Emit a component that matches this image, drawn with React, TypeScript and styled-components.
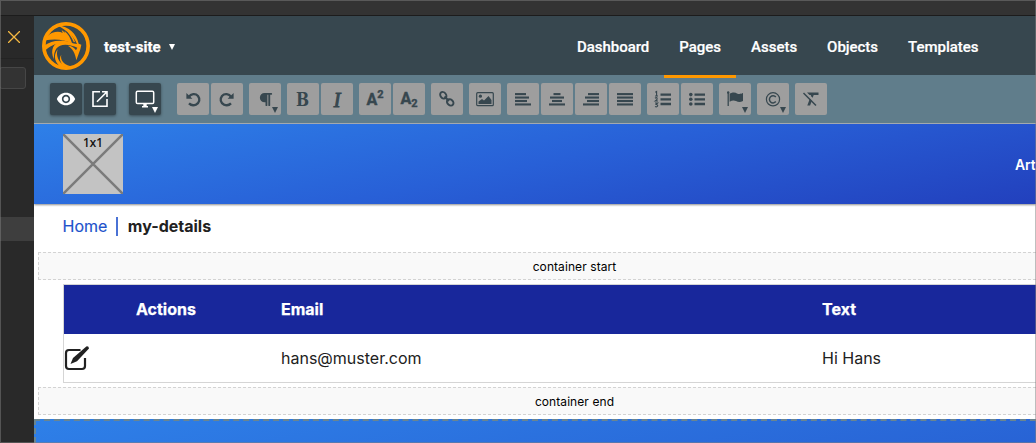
import React from "react";
import styled, { createGlobalStyle } from "styled-components";
import { FaParagraph } from "react-icons/fa";
import { MdVisibility } from "react-icons/md";

const slate = "#37474f";
const orange = "#ff9800";

const GlobalStyle = createGlobalStyle`
  * { box-sizing: border-box; }
  html, body { margin: 0; padding: 0; overflow: hidden; }
`;

const Window = styled.div`
  position: relative;
  width: 1036px;
  height: 443px;
  display: flex;
  flex-direction: column;
  overflow: hidden;
  background: #292929;
  font-family: Inter, "Liberation Sans", sans-serif;
  &::after {
    content: "";
    position: absolute;
    inset: 0;
    border: 1px solid rgba(128, 128, 128, 0.5);
    pointer-events: none;
  }
`;

const TitleStrip = styled.div`
  height: 16px;
  flex: none;
  background: #333;
  border-bottom: 1px solid #1c1c1c;
`;

const Body = styled.div`
  flex: 1;
  display: flex;
  min-height: 0;
`;

const Sidebar = styled.aside`
  width: 34px;
  flex: none;
  display: flex;
  flex-direction: column;
  background: #292929;
`;

const SidebarTop = styled.div`
  height: 43px;
  flex: none;
  padding: 15px 0 0 8px;
  border-bottom: 1px solid #232323;
  line-height: 0;
`;

const SidebarField = styled.div`
  height: 22px;
  width: 27px;
  margin-top: 8px;
  margin-left: -1px;
  flex: none;
  background: #333;
  border: 1px solid #464646;
  border-radius: 3px;
`;

const SidebarRow = styled.div`
  height: 24px;
  margin-top: 128px;
  flex: none;
  background: #3e3e3e;
`;

const Main = styled.main`
  flex: 1;
  min-width: 0;
  display: flex;
  flex-direction: column;
  overflow: hidden;
  background: #fff;
`;

const Header = styled.header`
  height: 59px;
  flex: none;
  display: flex;
  align-items: center;
  padding: 0 42.5px 0 8px;
  background: ${slate};
  color: #fff;
  font-family: Roboto, "Liberation Sans", sans-serif;
`;

const SiteName = styled.div`
  display: flex;
  align-items: center;
  gap: 8px;
  margin-left: 14px;
  margin-top: 3px;
  font-size: 15px;
  font-weight: 700;
  -webkit-text-stroke: 0.25px currentColor;
`;

const Caret = styled.span`
  width: 0;
  height: 0;
  margin-left: 0.5px;
  border-left: 3px solid transparent;
  border-right: 3px solid transparent;
  border-top: 6px solid currentColor;
`;

const Nav = styled.nav`
  display: flex;
  align-self: stretch;
  margin-left: auto;
`;

const NavItem = styled.a<{ $active?: boolean }>`
  position: relative;
  z-index: 1;
  height: 62px;
  padding: 2px 15px 0;
  line-height: 58px;
  font-size: 15px;
  font-weight: 500;
  letter-spacing: -0.02px;
  -webkit-text-stroke: 0.2px currentColor;
  white-space: nowrap;
  border-bottom: 3px solid ${(p) => (p.$active ? orange : "transparent")};
`;

const Toolbar = styled.div`
  height: 49px;
  flex: none;
  display: flex;
  align-items: flex-start;
  gap: 6px;
  padding: 8px 16px 0;
  background: #607d8b;
  border-bottom: 1px solid #a9afb5;
`;

const ToolGroup = styled.div<{ $after?: number }>`
  display: flex;
  gap: 2px;
  margin-right: ${(p) => p.$after ?? 0}px;
`;

const Tool = styled.button<{ $enabled?: boolean }>`
  position: relative;
  width: 32px;
  height: 32px;
  padding: 0;
  border: 0;
  border-radius: 2px;
  display: flex;
  align-items: center;
  justify-content: center;
  background: ${(p) => (p.$enabled ? slate : "#9e9e9e")};
  color: ${(p) => (p.$enabled ? "#fff" : slate)};
  box-shadow: ${(p) => (p.$enabled ? "0 1px 3px rgba(0,0,0,.4)" : "none")};
`;

const ToolCaret = styled.span`
  position: absolute;
  right: 3px;
  bottom: 2px;
  border-left: 3px solid transparent;
  border-right: 3px solid transparent;
  border-top: 6px solid currentColor;
`;

const SerifGlyph = styled.span<{ $italic?: boolean }>`
  font-family: ${(p) => (p.$italic ? '"Liberation Serif"' : '"DejaVu Serif"')}, serif;
  font-size: ${(p) => (p.$italic ? 20 : 18)}px;
  font-weight: ${(p) => (p.$italic ? 400 : 700)};
  font-style: ${(p) => (p.$italic ? "italic" : "normal")};
  -webkit-text-stroke: ${(p) => (p.$italic ? "1px" : "0")} currentColor;
  transform: ${(p) => (p.$italic ? "none" : "scaleX(.86)")};
  line-height: 20px;
  padding-top: 1px;
`;

const ScriptGlyph = styled.span<{ $sub?: boolean }>`
  display: flex;
  align-items: ${(p) => (p.$sub ? "flex-end" : "flex-start")};
  height: 20px;
  padding-top: ${(p) => (p.$sub ? 0 : 1)}px;
  font: 800 16px/20px Roboto, sans-serif;
  -webkit-text-stroke: 0.3px currentColor;
  small {
    font-size: 11px;
    line-height: ${(p) => (p.$sub ? 11 : 9)}px;
  }
`;

const Hero = styled.section`
  height: 80px;
  flex: none;
  position: relative;
  display: flex;
  align-items: center;
  justify-content: space-between;
  padding-left: 29px;
  background: linear-gradient(169deg, #2e80e8, #2860d7 50%, #2240bd);
  box-shadow: 0 1px 2px rgba(0, 0, 0, 0.45);
`;

const HeroLink = styled.a`
  width: 21px;
  white-space: nowrap;
  color: #fff;
  font-size: 14px;
  font-weight: 600;
  letter-spacing: -0.1px;
`;

const Placeholder = styled.div`
  position: relative;
  width: 60px;
  height: 60px;
  background: #c3c3c3;
  svg { display: block; }
`;

const PlaceholderLabel = styled.span`
  position: absolute;
  top: 2px;
  left: 0;
  width: 100%;
  text-align: center;
  font: 12px/14px "Noto Sans", sans-serif;
  -webkit-text-stroke: 0.2px currentColor;
  color: #000;
`;

const Breadcrumb = styled.div`
  height: 48px;
  flex: none;
  display: flex;
  align-items: center;
  padding: 0 0 4px 28.5px;
  font-size: 16px;
  color: #212121;
`;

const Crumb = styled.a`
  color: #2152cb;
  -webkit-text-stroke: 0.15px currentColor;
`;

const Divider = styled.span`
  width: 2px;
  height: 19px;
  margin: 0 9.5px 0 9px;
  background: #4a72d5;
`;

const ContainerMark = styled.div<{ $last?: boolean }>`
  height: 28px;
  flex: none;
  margin-left: 4px;
  margin-bottom: ${(p) => (p.$last ? 4 : 0)}px;
  width: 1073px;
  border: 1px dashed #d3d3d3;
  background: #f9f9f9;
  text-align: center;
  font: 12px/27px Inter, sans-serif;
  letter-spacing: 0.08px;
  color: #000;
`;

const Table = styled.div`
  flex: none;
  width: 1020px;
  margin: 4px 0 4px 29px;
  border: 1px solid #d5d5d5;
`;

const Row = styled.div<{ $head?: boolean }>`
  display: grid;
  grid-template-columns: 205px 541px 1fr;
  height: ${(p) => (p.$head ? 49 : 48)}px;
  align-items: center;
  padding: 0 0 ${(p) => (p.$head ? 1 : 0)}px 12px;
  font-size: 16px;
  font-weight: ${(p) => (p.$head ? 700 : 400)};
  -webkit-text-stroke: ${(p) => (p.$head ? 0.25 : 0)}px currentColor;
  background: ${(p) => (p.$head ? "#18279b" : "#fff")};
  color: ${(p) => (p.$head ? "#fff" : "#212121")};
`;

const ActionsHead = styled.span`
  padding-left: 60px;
`;

const ActionCell = styled.span`
  margin-left: -12px;
  svg { display: block; }
`;

const Footer = styled.footer`
  flex: 1;
  border: 2px dashed #6a8590;
  border-bottom: 0;
  border-right: 0;
  background: linear-gradient(169deg, #2e80e8, #2863d5) border-box;
`;

const Svg = ({ children }: { children: React.ReactNode }) => (
  <svg width="20" height="20" viewBox="0 0 20 20" fill="none" stroke="currentColor">
    {children}
  </svg>
);

const Logo = () => (
  <svg width="48" height="48" viewBox="0 0 144 144" fill={orange}>
    <circle cx="72" cy="72" r="66.5" fill="none" stroke={orange} strokeWidth="11" />
    <path d="M14 44C32 28 50 27 62 33L59 24L70 33L67 26C79 36 86 48 90 64C66 53 42 50 10 55Z" />
    <path d="M46 10C82 13 103 36 110 65L118 68L115 82L103 115C100 95 92 79 77 71C88 71 97 76 102 85L106 77C95 72 84 68 70 68C46 68 34 84 36 112C23 84 34 62 60 56C80 55 91 65 105 66C96 44 78 28 46 10Z" />
    <path d="M68 22C84 30 93 42 99 60L95 60C89 46 80 33 68 22Z" />
    <path d="M8 70C24 59 40 54 68 57L76 65C48 60 28 68 9 86Z" />
    <path d="M47 82C41 99 48 121 70 134L54 134C34 116 36 97 47 82ZM58 98C54 112 64 127 84 132L72 136C53 123 50 109 58 98Z" />
  </svg>
);

const Lines = ({ rows }: { rows: [number, number][] }) => (
  <Svg>
    <g strokeWidth="2.1">
      {rows.map(([a, b], i) => <path key={i} d={`M${a} ${5.1 + i * 3.45}H${b}`} />)}
    </g>
  </Svg>
);

const UndoShape = () => (
  <>
    <path d="M5.6 8.3C8 4.5 12.5 4.2 15 7C17.4 10 16.5 14 13 15.6C10.2 16.8 7.6 16 6 14.4" strokeWidth="2.3" />
    <path d="M3.4 3.9V9.8H9.4Z" fill="currentColor" stroke="none" />
  </>
);

const ListLines = () => <path d="M7.5 5.6H18M7.5 10.3H18M7.5 15H18" strokeWidth="2.3" />;

export default function App() {
  return (
    <>
      <GlobalStyle />
      <Window>
        <TitleStrip />
        <Body>
          <Sidebar>
            <SidebarTop>
              <svg width="12" height="12" viewBox="0 0 12 12" stroke="#f5b942" strokeWidth="1.3"><path d="M0 0L12 12M12 0L0 12" /></svg>
            </SidebarTop>
            <SidebarField />
            <SidebarRow />
          </Sidebar>
          <Main>
            <Header>
              <Logo />
              <SiteName>test-site <Caret /></SiteName>
              <Nav>
                <NavItem>Dashboard</NavItem>
                <NavItem $active>Pages</NavItem>
                <NavItem>Assets</NavItem>
                <NavItem>Objects</NavItem>
                <NavItem>Templates</NavItem>
              </Nav>
            </Header>
            <Toolbar>
              <ToolGroup $after={7}>
                <Tool $enabled><MdVisibility size={20} /></Tool>
                <Tool $enabled><Svg><path d="M10 2.8H3V17.2H17V10M12 2.8H17V8M17 2.8L7 12.8" strokeWidth="1.6" /></Svg></Tool>
              </ToolGroup>
              <ToolGroup $after={10}>
                <Tool $enabled><Svg><rect x="1.3" y="2.3" width="17.4" height="12.2" rx="1.3" strokeWidth="1.5" /><path d="M8.3 15H11.7V17H13V18.4H7V17H8.3Z" fill="currentColor" stroke="none" /></Svg><ToolCaret /></Tool>
              </ToolGroup>
              <ToolGroup>
                <Tool><Svg><UndoShape /></Svg></Tool>
                <Tool><Svg><g transform="translate(20 0) scale(-1 1)"><UndoShape /></g></Svg></Tool>
              </ToolGroup>
              <ToolGroup><Tool><FaParagraph size={15} /><ToolCaret /></Tool></ToolGroup>
              <ToolGroup>
                <Tool><SerifGlyph>B</SerifGlyph></Tool>
                <Tool><SerifGlyph $italic>I</SerifGlyph></Tool>
              </ToolGroup>
              <ToolGroup>
                <Tool><ScriptGlyph>A<small>2</small></ScriptGlyph></Tool>
                <Tool><ScriptGlyph $sub>A<small>2</small></ScriptGlyph></Tool>
              </ToolGroup>
              <ToolGroup>
                <Tool><Svg><g strokeWidth="1.9"><ellipse cx="6.3" cy="6.3" rx="3.6" ry="2.8" transform="rotate(50 6.3 6.3)" /><ellipse cx="13.2" cy="13.3" rx="3.6" ry="2.8" transform="rotate(40 13.2 13.3)" /><path d="M7.5 7.5L12 12" /></g></Svg></Tool>
              </ToolGroup>
              <ToolGroup>
                <Tool><Svg><rect x="1.7" y="3.7" width="16.6" height="13" rx="1" strokeWidth="1.2" /><g fill="currentColor" stroke="none"><circle cx="5.4" cy="7.2" r="1.6" /><path d="M3.5 15V12.5L7 10L9 11.5L13.5 7L16.5 11V15Z" /></g></Svg></Tool>
              </ToolGroup>
              <ToolGroup>
                <Tool><Lines rows={[[2, 13], [2, 16], [2, 14], [2, 18]]} /></Tool>
                <Tool><Lines rows={[[6.5, 13.5], [3, 17], [5, 15], [2, 18]]} /></Tool>
                <Tool><Lines rows={[[7, 18], [4, 18], [6, 18], [2, 18]]} /></Tool>
                <Tool><Lines rows={[[2, 18], [2, 18], [2, 18], [2, 18]]} /></Tool>
              </ToolGroup>
              <ToolGroup>
                <Tool><Svg><ListLines /><path d="M2.3 3.2L3.6 2.5V7M2 7H5M2 9.2C4 7.7 5.7 9.5 2.3 12H5M2 14H4.7L3.2 15.4C6 15.7 4.5 18.7 2 17.5" strokeWidth="1.1" /></Svg></Tool>
                <Tool><Svg><ListLines /><g fill="currentColor" stroke="none"><circle cx="3.8" cy="5.6" r="1.8" /><circle cx="3.8" cy="10.3" r="1.8" /><circle cx="3.8" cy="15" r="1.8" /></g></Svg></Tool>
              </ToolGroup>
              <ToolGroup>
                <Tool><Svg><path d="M3.2 3V17" strokeWidth="1.3" /><circle cx="3.2" cy="3.5" r="1.2" fill="currentColor" stroke="none" /><path d="M4.6 4.6C8 2.8 10.5 3.3 12 4.4C14 5.4 16.5 4.8 18 4V12C15 13.6 13 13 11 12C9 11 7 11.3 4.6 12.7Z" fill="currentColor" stroke="none" /></Svg><ToolCaret /></Tool>
              </ToolGroup>
              <ToolGroup>
                <Tool><Svg><circle cx="10" cy="10.3" r="6.6" strokeWidth="1.2" /><path d="M12.8 8A3.6 3.6 0 1 0 12.8 12.6" strokeWidth="1.5" /></Svg><ToolCaret /></Tool>
              </ToolGroup>
              <ToolGroup>
                <Tool><Svg><path d="M2.5 4L15 16.5" strokeWidth="1.5" /><path d="M6 3.5H17.5V6H12.7L11.7 8.8L9.8 6.9L10 6H8.5ZM8.8 9.7L10.8 11.7L9.1 16.5H6.3Z" fill="currentColor" stroke="none" /></Svg></Tool>
              </ToolGroup>
            </Toolbar>
            <Hero>
              <Placeholder>
                <svg width="60" height="60" viewBox="0 0 60 60" stroke="#7b7b7b" strokeWidth="2.5"><path d="M0 0L60 60M60 0L0 60" /></svg>
                <PlaceholderLabel>1x1</PlaceholderLabel>
              </Placeholder>
              <HeroLink>Art</HeroLink>
            </Hero>
            <Breadcrumb><Crumb>Home</Crumb><Divider /><b>my-details</b></Breadcrumb>
            <ContainerMark>container start</ContainerMark>
            <Table>
              <Row $head><ActionsHead>Actions</ActionsHead><span>Email</span><span>Text</span></Row>
              <Row>
                <ActionCell>
                  <svg width="26" height="26" viewBox="0 0 26 26" fill="none" stroke="#212121">
                    <path d="M16.5 5H5Q2 5 2 8V21Q2 24 5 24H18Q21 24 21 21V13" strokeWidth="2.2" />
                    <path d="M6.5 19L9 13L22.3 1.4Q24.7 .8 25 3.4L13 16.2Z" fill="#212121" stroke="none" />
                  </svg>
                </ActionCell>
                <span>hans@muster.com</span><span>Hi Hans</span>
              </Row>
            </Table>
            <ContainerMark $last>container end</ContainerMark>
            <Footer />
          </Main>
        </Body>
      </Window>
    </>
  );
}
